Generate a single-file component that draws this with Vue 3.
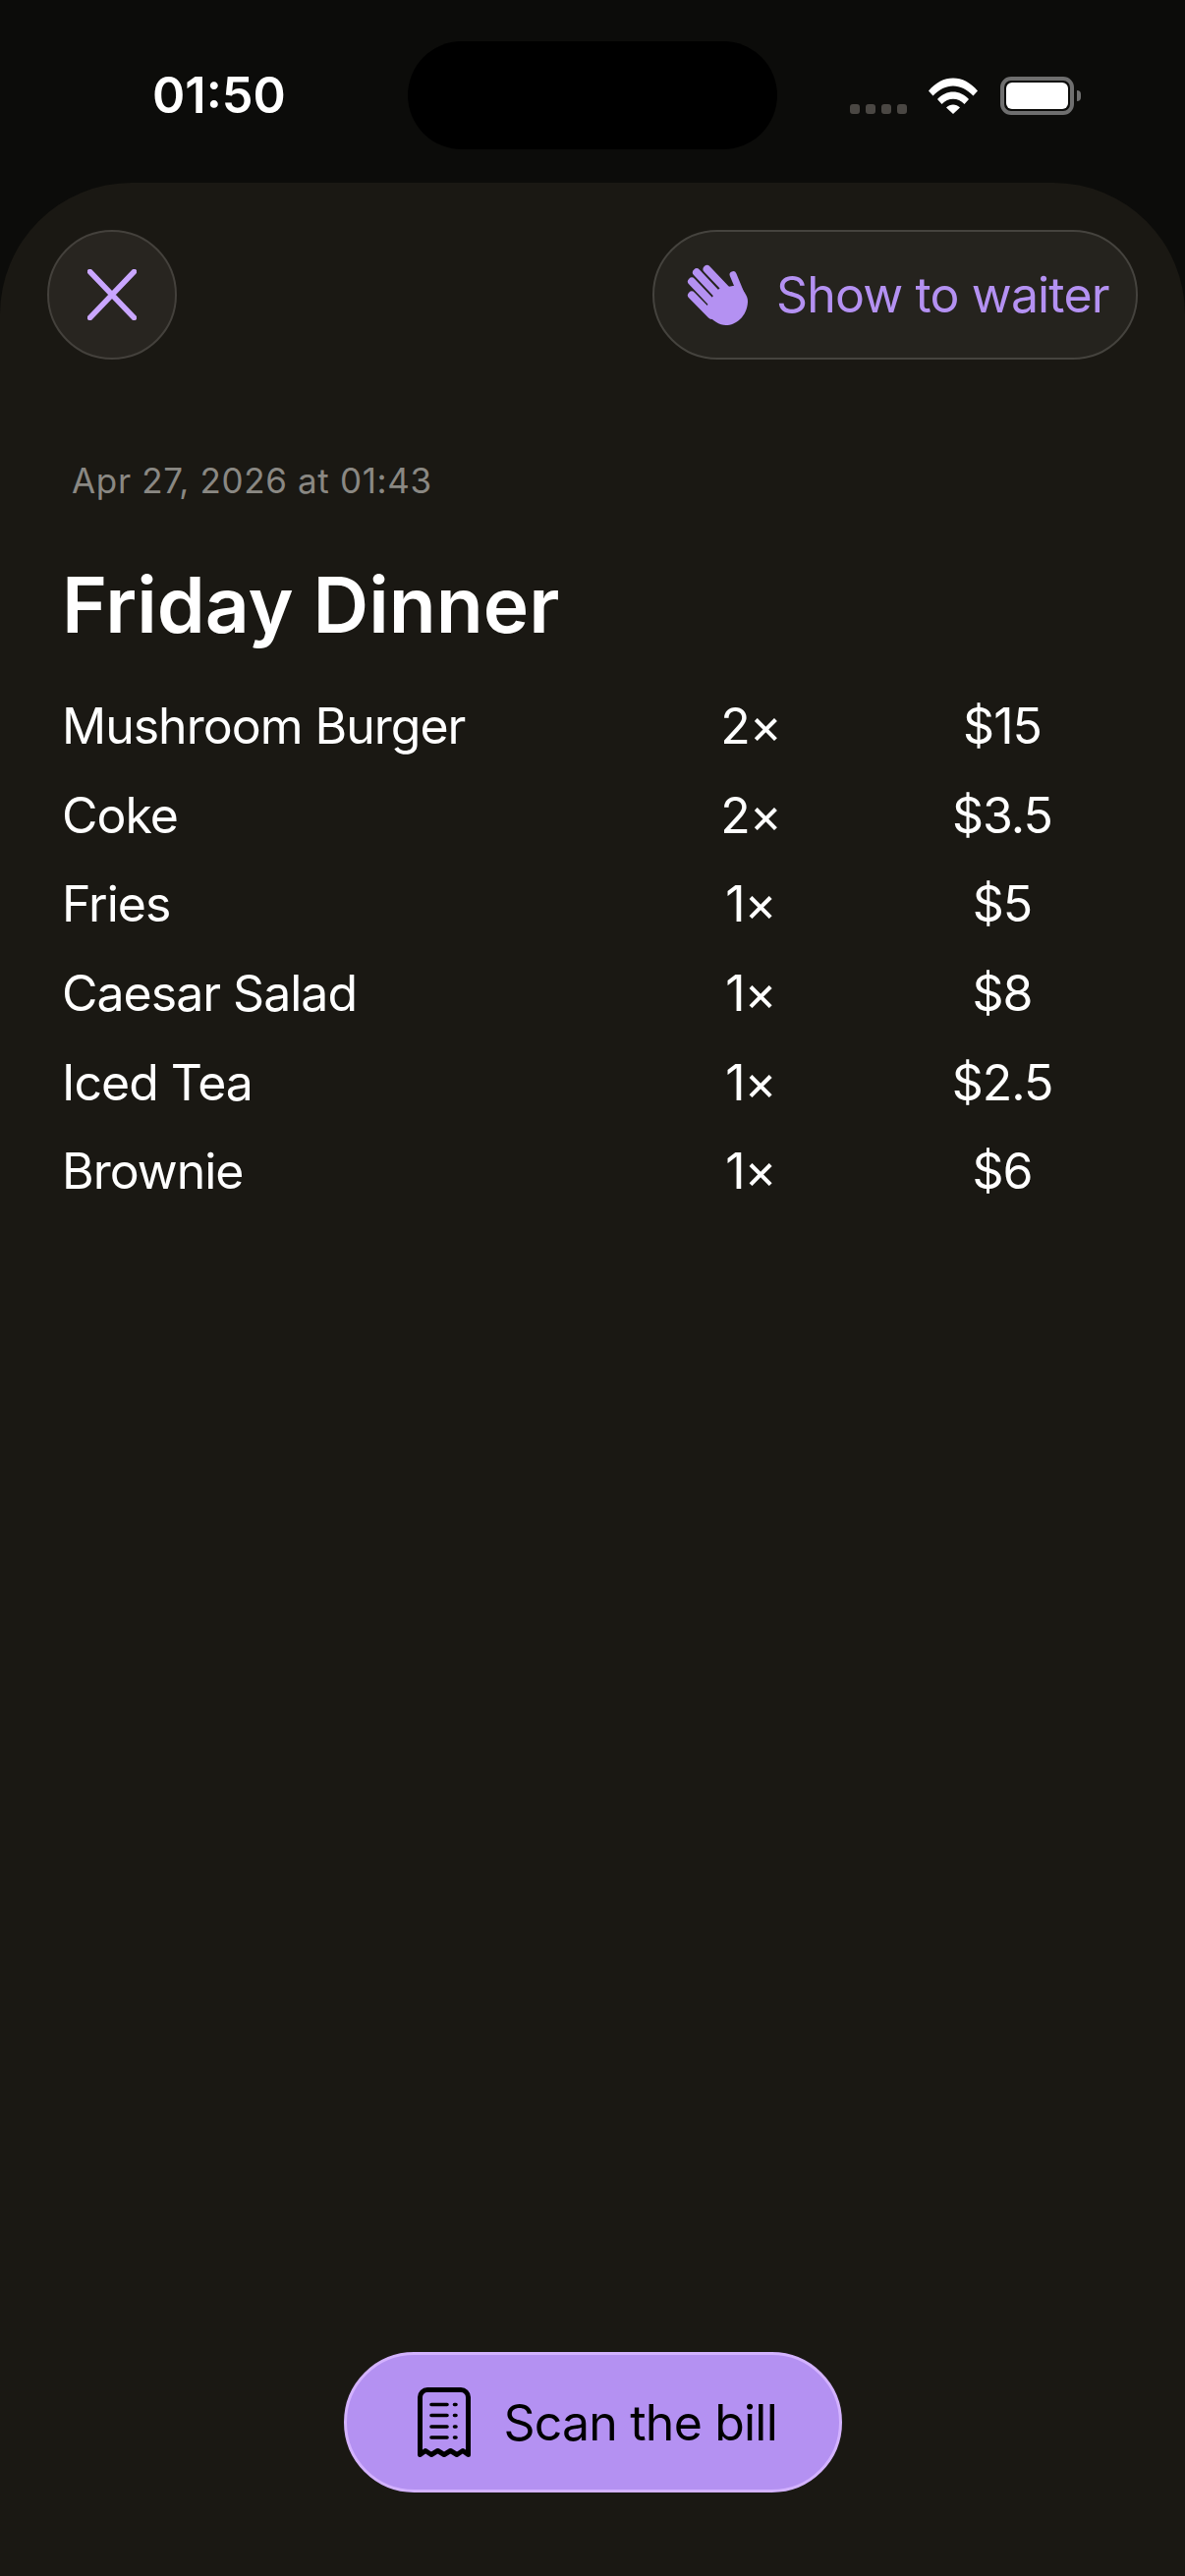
<script setup>
const items = [
  { name: 'Mushroom Burger', qty: '2×', price: '$15' },
  { name: 'Coke', qty: '2×', price: '$3.5' },
  { name: 'Fries', qty: '1×', price: '$5' },
  { name: 'Caesar Salad', qty: '1×', price: '$8' },
  { name: 'Iced Tea', qty: '1×', price: '$2.5' },
  { name: 'Brownie', qty: '1×', price: '$6' },
]
</script>

<template>
  <div class="screen">
    <header class="status">
      <span class="time">01:50</span>
      <div class="island"></div>
      <div class="signal">
        <i></i><i></i><i></i><i></i>
      </div>
      <svg class="wifi" viewBox="0 0 50 37" width="50" height="37">
        <path d="M0 13.5 C14 -4 36 -4 50 13.5 L45.5 18.5 C33 5 17 5 4.5 18.5 Z" fill="#fff" />
        <path d="M9 22 C18 12 32 12 41 22 L36.5 27 C30 20 20 20 13.5 27 Z" fill="#fff" />
        <path d="M18 30.5 C22 26.5 28 26.5 32 30.5 L25 37 Z" fill="#fff" />
      </svg>
      <div class="battery"><div class="battery-fill"></div></div>
      <div class="battery-nub"></div>
    </header>

    <main class="sheet">
      <div class="toolbar">
        <button class="round-btn">
          <svg viewBox="0 0 50 52" width="50" height="52">
            <path d="M2.5 2.5 L47.5 49.5 M47.5 2.5 L2.5 49.5" stroke="#c9a6ff" stroke-width="5.5" stroke-linecap="round" fill="none" />
          </svg>
        </button>
        <button class="pill-btn">
          <svg class="hand" viewBox="55 140 190 190" width="63" height="63">
            <g stroke="#b491f2" stroke-linecap="round" fill="none">
              <path d="M117 155 L190 232" stroke-width="24" />
              <path d="M85 165 L165 250" stroke-width="24" />
              <path d="M70 193 L145 272" stroke-width="24" />
              <path d="M70 235 L130 296" stroke-width="24" />
              <path d="M197 172 L222 232" stroke-width="21" />
            </g>
            <path d="M112 288 L118 266 L135 238 L155 214 L205 205 L218 205 C235 232 243 240 242 255 C240 300 205 327 175 327 C155 327 135 315 112 288 Z" fill="#b491f2" />
          </svg>
          <span>Show to waiter</span>
        </button>
      </div>

      <p class="date">Apr 27, 2026 at 01:43</p>
      <h1 class="title">Friday Dinner</h1>

      <section class="list">
        <div v-for="item in items" :key="item.name" class="row">
          <span>{{ item.name }}</span>
          <span class="center">{{ item.qty }}</span>
          <span class="center">{{ item.price }}</span>
        </div>
      </section>

      <div class="footer">
        <button class="scan-btn">
          <svg viewBox="24 10 54 71" width="54" height="71">
            <path d="M26.5 78.5 V20 a7.5 7.5 0 0 1 7.5-7.5 H68 a7.5 7.5 0 0 1 7.5 7.5 V78.5 L70 74.5 L64 78.5 L57.5 74.5 L51 78.5 L44.5 74.5 L38 78.5 L32 74.5 Z" fill="none" stroke="#000" stroke-width="5" stroke-linejoin="round" />
            <path d="M38 27.5 H54 M38 38.5 H54 M38 50 H54 M38 61 H54 M61.5 27.5 H63 M61.5 38.5 H63 M61.5 50 H63 M61.5 61 H63" fill="none" stroke="#000" stroke-width="3.6" stroke-linecap="round" />
          </svg>
          <span>Scan the bill</span>
        </button>
      </div>
    </main>
  </div>
</template>

<style>
html, body { margin: 0; background: #0c0c0a; }
</style>

<style scoped>
.screen {
  width: 1206px;
  height: 2622px;
  display: flex;
  flex-direction: column;
  background: #0c0c0a;
  font-family: Inter, "Liberation Sans", sans-serif;
  color: #fff;
  overflow: hidden;
}
.status {
  height: 144px;
  padding: 42px 0 0 155px;
  display: flex;
  align-items: flex-start;
  flex: none;
}
.time {
  width: 260px;
  height: 110px;
  display: flex;
  align-items: center;
  font-size: 50.5px;
  font-weight: 600;
  line-height: 1;
}
.island {
  width: 376px;
  height: 110px;
  border-radius: 55px;
  background: #000;
}
.signal {
  margin: 64px 0 0 74px;
  display: flex;
  gap: 6px;
}
.signal i {
  width: 10px;
  height: 10px;
  border-radius: 3px;
  background: #4a4743;
}
.wifi { margin: 37px 0 0 22px; }
.battery {
  margin: 36px 0 0 23px;
  width: 75px;
  height: 39px;
  box-sizing: border-box;
  border: 4px solid #6f6f6f;
  border-radius: 11px;
  padding: 2px;
}
.battery-fill {
  height: 100%;
  background: #fff;
  border-radius: 6px;
}
.battery-nub {
  margin: 50px 0 0 3px;
  width: 4px;
  height: 11px;
  background: #6f6f6f;
  border-radius: 0 4px 4px 0;
}
.sheet {
  flex: 1;
  background: #1a1813;
  border-radius: 134px 134px 0 0;
  display: flex;
  flex-direction: column;
  padding: 48px 0 85px;
  min-height: 0;
}
.toolbar {
  display: flex;
  justify-content: space-between;
  padding: 0 48px;
}
button {
  font: inherit;
  box-sizing: border-box;
  cursor: pointer;
}
.round-btn {
  width: 132px;
  height: 132px;
  padding: 0;
  border-radius: 50%;
  background: #282520;
  border: 2px solid #44413c;
  display: flex;
  align-items: center;
  justify-content: center;
}
.pill-btn {
  width: 494px;
  height: 132px;
  padding: 0 0 0 33px;
  border-radius: 66px;
  background: #25231e;
  border: 2px solid #45433e;
  display: flex;
  align-items: center;
  gap: 28px;
  color: #b491f2;
  font-size: 50px;
  letter-spacing: -0.85px;
}
.date {
  margin: 101px 0 0 73px;
  font-size: 35px;
  line-height: 44px;
  color: #8a8883;
  letter-spacing: 0.65px;
}
.title {
  margin: 55px 0 0 63px;
  font-size: 78.5px;
  font-weight: 600;
  line-height: 100px;
}
.list {
  margin-top: 28px;
  padding: 0 58px 0 63px;
}
.row {
  display: grid;
  grid-template-columns: 1fr 256px 256px;
  height: 90.6px;
  align-items: center;
  font-size: 50px;
  letter-spacing: -1px;
}
.center { text-align: center; }
.footer {
  margin-top: auto;
  display: flex;
  justify-content: center;
}
.scan-btn {
  width: 507px;
  height: 143px;
  padding: 0 0 0 72px;
  border-radius: 72px;
  background: #b491f2;
  border: 3px solid #d3b2ff;
  display: flex;
  align-items: center;
  gap: 34px;
  color: #000;
  font-size: 50px;
  letter-spacing: -0.8px;
}
</style>
